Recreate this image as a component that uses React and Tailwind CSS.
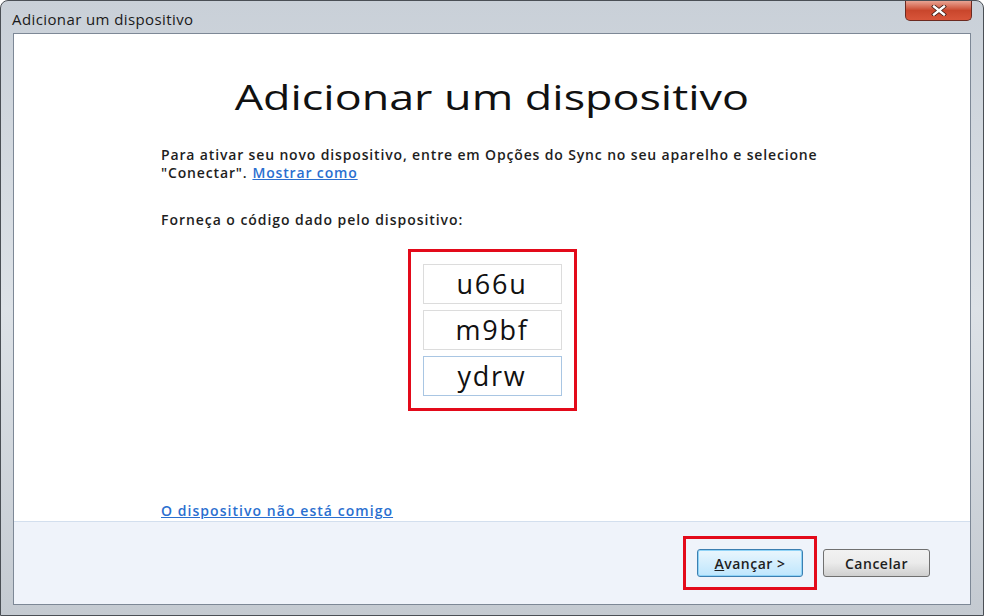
export default function App() {
  const codes = ['u66u', 'm9bf', 'ydrw'];

  return (
    <div className="w-[984px] h-[616px] flex flex-col rounded-t-[8px] border border-[#4a4f55] bg-gradient-to-b from-[#c9d0d8] via-[#dde2e7] to-[#c4cad1] font-['Open_Sans',sans-serif] overflow-hidden">
      {/* Title bar */}
      <div className="h-[32px] flex items-start justify-between pl-[11px] pr-[11px]">
        <span className="mt-[7px] text-[15px] tracking-[0.4px] text-[#1a1a1a]">Adicionar um dispositivo</span>
        <button className="w-[67px] h-[20px] rounded-b-[5px] border border-t-0 border-[#6b2a20] bg-gradient-to-b from-[#e8a393] via-[#c9462c] to-[#d8553a] flex items-center justify-center">
          <svg width="16" height="11" viewBox="0 0 16 11">
            <path d="M3 1.5 L13 9.5 M13 1.5 L3 9.5" stroke="#3a1a14" strokeWidth="4" strokeLinecap="square" />
            <path d="M3 1.5 L13 9.5 M13 1.5 L3 9.5" stroke="#ffffff" strokeWidth="2.4" strokeLinecap="square" />
          </svg>
        </button>
      </div>

      {/* Client area */}
      <div className="flex-1 mx-[12px] mb-[10px] border border-[#7d8896] bg-white flex flex-col">
        <div className="flex-1 flex flex-col">
          <div className="mt-[38px] flex justify-center">
            <h1 className="inline-block scale-x-[1.32] text-[34px] leading-[50px] text-[#111]">
              Adicionar um dispositivo
            </h1>
          </div>

          {/* Intro */}
          <div className="mt-[24px] ml-[147px] text-[14px] leading-[18px] tracking-[0.85px] font-semibold text-[#1e1e1e]">
            <p>Para ativar seu novo dispositivo, entre em Opções do Sync no seu aparelho e selecione</p>
            <p className="flex gap-[5px]">
              <span>"Conectar".</span>
              <a className="text-[#2a6fd0] underline">Mostrar como</a>
            </p>
          </div>

          <p className="mt-[27px] ml-[147px] text-[14px] tracking-[0.95px] font-semibold text-[#1e1e1e]">
            Forneça o código dado pelo dispositivo:
          </p>

          {/* Code boxes */}
          <div className="mt-[19px] self-center border-[3px] border-[#e30a1a] px-[12px] py-[12px] flex flex-col gap-[6px]">
            {codes.map((c, i) => (
              <div
                key={c}
                className={`w-[139px] h-[40px] border flex items-center justify-center text-[27px] tracking-[1.8px] text-[#111] ${
                  i === 2 ? 'border-[#a9c6e3]' : 'border-[#dcdcdc]'
                }`}
              >
                {c}
              </div>
            ))}
          </div>

          <div className="mt-auto mb-[-1px] ml-[147px]">
            <a className="text-[14px] tracking-[1.05px] font-semibold text-[#2a6fd0] underline">O dispositivo não está comigo</a>
          </div>
        </div>

        {/* Footer */}
        <div className="h-[83px] bg-[#eff3fa] border-t border-[#d3dfee] flex items-center justify-end pr-[40px] gap-[6px]">
          <div className="border-[3px] border-[#e30a1a] px-[11px] py-[10px]">
            <button className="w-[106px] h-[28px] rounded-[3px] border border-[#3c7fb1] bg-gradient-to-b from-[#eaf6fd] to-[#bee6fd] shadow-[inset_0_0_0_1px_#8fd3f7] text-[14px] tracking-[0.5px] font-semibold text-[#1e1e1e]">
              <span className="underline">A</span>vançar &gt;
            </button>
          </div>
          <button className="w-[107px] h-[28px] rounded-[3px] border border-[#707070] bg-gradient-to-b from-[#f2f2f2] via-[#ebebeb] to-[#cfcfcf] text-[14px] tracking-[0.5px] font-semibold text-[#1e1e1e]">
            Cancelar
          </button>
        </div>
      </div>
    </div>
  );
}
